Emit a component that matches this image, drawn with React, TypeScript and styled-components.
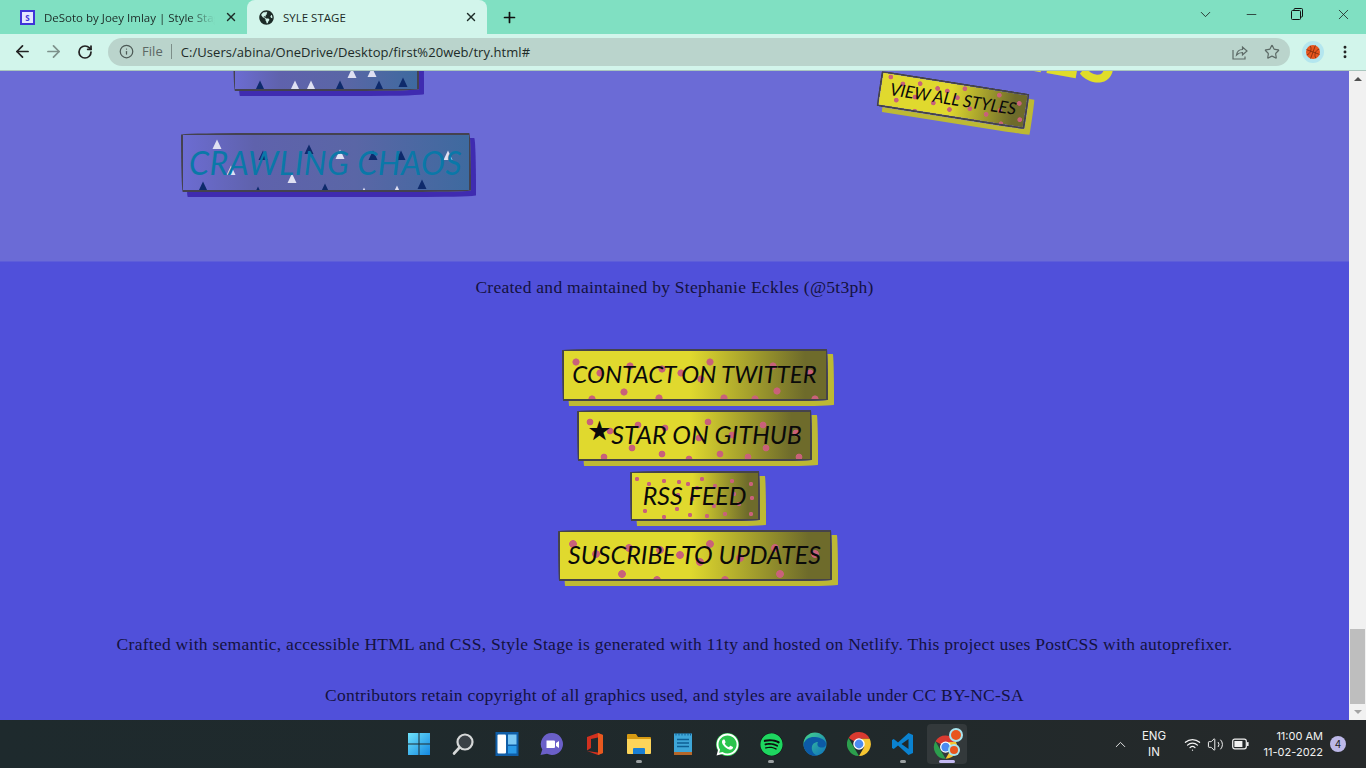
import * as React from "react";
import styled, { createGlobalStyle } from "styled-components";
import {
  ArrowLeft,
  ArrowRight,
  RotateCw,
  Info,
  Star,
  MoreVertical,
  ChevronDown,
  ChevronUp,
  Minus,
  X,
  Plus,
  Wifi,
  Volume2,
} from "lucide-react";
import { FaGlobeAmericas, FaWhatsapp, FaSpotify } from "react-icons/fa";

type Dot = [number, number];
type Tri = [number, number, boolean];

const GlobalStyle = createGlobalStyle`
  html, body { margin: 0; padding: 0; height: 100%; overflow: hidden; }
  #root { height: 100%; }
`;

// dots are painted as background layers so each button keeps its own pattern
const dotLayers = (dots: Dot[], r: number) =>
  dots
    .map(
      ([x, y]) =>
        `radial-gradient(circle at ${x}px ${y}px, #c9617a ${r}px, transparent ${r + 0.7}px)`
    )
    .join(", ");

const Screen = styled.div`
  width: 1366px;
  height: 768px;
  display: flex;
  flex-direction: column;
  overflow: hidden;
  font-family: "Open Sans", sans-serif;
`;

const TabStrip = styled.div`
  height: 34px;
  flex: none;
  background: #80e0c2;
  display: flex;
  align-items: flex-end;
  padding-left: 8px;
  color: #1c2b27;
  font-size: 11.5px;
`;

const Tab = styled.div<{ $active?: boolean; $width: number }>`
  width: ${({ $width }) => $width}px;
  height: 34px;
  box-sizing: border-box;
  display: flex;
  align-items: center;
  padding: 0 9px 0 12px;
  gap: 9px;
  border-radius: 8px 8px 0 0;
  background: ${({ $active }) => ($active ? "#d2f5eb" : "transparent")};
`;

const TabTitle = styled.span<{ $fade?: boolean }>`
  flex: 1;
  white-space: nowrap;
  overflow: hidden;
  ${({ $fade }) =>
    $fade &&
    `-webkit-mask-image: linear-gradient(to right, #000 85%, transparent);`}
`;

const Favicon = styled.span`
  width: 15px;
  height: 15px;
  box-sizing: border-box;
  border: 2px solid #3f33d8;
  background: #e4e6ff;
  color: #3f33d8;
  font-size: 8px;
  font-weight: 700;
  line-height: 11px;
  text-align: center;
`;

const NewTab = styled.div`
  width: 44px;
  height: 34px;
  display: flex;
  align-items: center;
  justify-content: center;
  color: #111;
`;

const WindowControls = styled.div`
  margin-left: auto;
  display: flex;
  align-self: flex-start;
  height: 28px;
  align-items: center;
`;

const WindowButton = styled.div`
  width: 46px;
  height: 28px;
  display: flex;
  align-items: center;
  justify-content: center;
  color: #1a1a1a;
`;

const RestoreIcon = styled.svg`
  width: 12px;
  height: 12px;
  fill: none;
  stroke: #111;
  stroke-width: 1;
`;

const Toolbar = styled.div`
  height: 37px;
  flex: none;
  box-sizing: border-box;
  background: #d2f5eb;
  border-bottom: 1px solid #a9c6be;
  display: flex;
  align-items: center;
  padding: 0 9px 1px 7px;
  color: #222;
`;

const NavButton = styled.div<{ $dim?: boolean }>`
  width: 31px;
  display: flex;
  justify-content: center;
  color: ${({ $dim }) => ($dim ? "#7d918b" : "#222")};
`;

const UrlBar = styled.div`
  flex: 1;
  height: 28px;
  margin-left: 8px;
  border-radius: 14px;
  background: #bad4cc;
  display: flex;
  align-items: center;
  padding: 0 2px 0 11px;
  font-size: 13px;
  letter-spacing: 0.05px;
  color: #202b28;
`;

const FileLabel = styled.span`
  color: #5b6764;
  margin-left: 8px;
  padding-right: 8px;
  border-right: 1px solid #7d8e89;
  line-height: 15px;
`;

const UrlText = styled.span`
  margin-left: 9px;
  flex: 1;
`;

const UrlAction = styled.div`
  width: 32px;
  display: flex;
  justify-content: center;
  color: #5c6a66;
`;

const ShareIcon = styled.svg`
  width: 16px;
  height: 16px;
  fill: none;
  stroke: #5c6a66;
  stroke-width: 1.2;
`;

const Avatar = styled.div`
  width: 22px;
  height: 22px;
  margin-left: 12px;
  border-radius: 50%;
  background: #b4e6ef;
  display: flex;
  align-items: center;
  justify-content: center;
`;

const MenuButton = styled.div`
  width: 24px;
  margin-left: 9px;
  display: flex;
  justify-content: center;
`;

const Viewport = styled.div`
  flex: 1;
  min-height: 0;
  display: flex;
`;

// anchored to the bottom: the page is scrolled to its end, the top overflows away
const Page = styled.main`
  flex: 1;
  min-width: 0;
  overflow: hidden;
  display: flex;
  flex-direction: column;
  justify-content: flex-end;
  font-family: "Liberation Serif", serif;
  color: #14123f;
`;

const Hero = styled.section`
  flex: none;
  background: #6b6bd6;
  display: grid;
  grid-template-columns: 650px 1fr;
`;

const StyleList = styled.div`
  display: flex;
  flex-direction: column;
  align-items: center;
  justify-content: flex-end;
  gap: 42px;
  padding: 0 0 69px 1px;
`;

const StyleCard = styled.a<{ $width: number; $height: number }>`
  position: relative;
  display: flex;
  align-items: center;
  justify-content: center;
  box-sizing: border-box;
  width: ${({ $width }) => $width}px;
  height: ${({ $height }) => $height}px;
  border: 2px solid #44424f;
  border-radius: 255px 8px 225px 8px / 8px 225px 8px 255px;
  box-shadow: 5px 5px 0 #3f2bb0;
  background: linear-gradient(to right, #6c6cd2 0%, #5f62ac 25%, #5a66a6 60%, #3e6a9f 100%);
  font-family: Lato, sans-serif;
  font-style: italic;
  font-size: 32px;
  color: #0a78a8;
  white-space: nowrap;
  overflow: hidden;
`;

const Confetti = styled.svg`
  position: absolute;
  left: 0;
  top: 0;
  width: 100%;
  height: 100%;
`;

const CardLabel = styled.span<{ $spread?: number }>`
  position: relative;
  letter-spacing: ${({ $spread }) => $spread ?? 0.5}px;
`;

const HeroAside = styled.div`
  display: flex;
  flex-direction: column;
  align-items: flex-start;
  justify-content: flex-end;
  padding: 0 0 143px 228px;
`;

const HeroTitle = styled.h2`
  margin: 0 0 5px 19px;
  font-family: Lato, sans-serif;
  font-weight: 900;
  font-size: 64px;
  line-height: 70px;
  color: #e0dd2a;
  transform: rotate(10deg);
  white-space: nowrap;
`;

const StageButton = styled.a<{
  $width: number;
  $height: number;
  $dots: Dot[];
  $r: number;
  $size: number;
  $tilt?: number;
}>`
  display: block;
  box-sizing: border-box;
  flex: none;
  width: ${({ $width }) => $width}px;
  height: ${({ $height }) => $height}px;
  line-height: ${({ $height }) => $height - 6}px;
  text-align: center;
  white-space: nowrap;
  border: 2.5px solid #45434a;
  border-radius: 255px 6px 225px 6px / 6px 225px 6px 255px;
  box-shadow: 6px 5px 0 #bdb934;
  background-image: ${({ $dots, $r }) => dotLayers($dots, $r)},
    linear-gradient(to right, #e0d92e 0%, #e0d92e 48%, #6e6b2b 92%);
  font-family: Lato, sans-serif;
  font-style: italic;
  font-size: ${({ $size }) => $size}px;
  color: #0a0a0a;
  transform: rotate(${({ $tilt }) => $tilt ?? 0}deg);
`;

const Credits = styled.section`
  flex: none;
  background: #5050da;
  border-top: 1px solid #5d5dd9;
  display: flex;
  flex-direction: column;
  align-items: center;
  padding: 12px 0 12px;
`;

const Line = styled.p<{ $after: number }>`
  margin: 0 0 ${({ $after }) => $after}px;
  font-size: 17.5px;
  line-height: 26px;
  text-align: center;
  letter-spacing: 0.27px;
`;

const Actions = styled.ul`
  display: flex;
  flex-direction: column;
  align-items: center;
  gap: 9.5px;
  list-style: none;
  margin: 0 0 50px;
  padding: 0 0 0 40px;
`;

const StarGlyph = styled.span`
  font-style: normal;
  font-family: "DejaVu Sans", sans-serif;
  font-size: 27px;
  position: relative;
  top: -4px;
`;

const Scrollbar = styled.div`
  width: 17px;
  flex: none;
  background: #f1f1f1;
  display: flex;
  flex-direction: column;
  align-items: center;
  justify-content: space-between;
`;

const ScrollArrow = styled.div<{ $down?: boolean }>`
  width: 0;
  height: 0;
  margin: 6px 0;
  border-left: 4px solid transparent;
  border-right: 4px solid transparent;
  ${({ $down }) =>
    $down ? "border-top: 4px solid #a3a3a3;" : "border-bottom: 4px solid #505050;"}
`;

const ScrollTrack = styled.div`
  flex: 1;
  width: 100%;
  display: flex;
  align-items: flex-end;
`;

const ScrollThumb = styled.div`
  width: 15px;
  height: 75px;
  margin: 0 1px;
  background: #bebebe;
`;

const Taskbar = styled.footer`
  height: 48px;
  flex: none;
  background: linear-gradient(to right, #1e2a2d, #20292b 60%, #26292a);
  display: grid;
  grid-template-columns: 399px auto 1fr;
  align-items: center;
  color: #f1f1f1;
  font-family: Inter, sans-serif;
`;

const Dock = styled.div`
  grid-column: 2;
  display: flex;
`;

const DockItem = styled.div<{ $active?: boolean; $open?: boolean }>`
  position: relative;
  width: 40px;
  height: 40px;
  margin-right: 4px;
  display: flex;
  align-items: center;
  justify-content: center;
  border-radius: 4px;
  background: ${({ $active }) => ($active ? "#33393b" : "transparent")};
  &::after {
    content: "";
    display: ${({ $open, $active }) => ($open || $active ? "block" : "none")};
    position: absolute;
    bottom: 1px;
    left: 50%;
    transform: translateX(-50%);
    width: ${({ $active }) => ($active ? 16 : 6)}px;
    height: 3px;
    border-radius: 2px;
    background: ${({ $active }) => ($active ? "#c3b9f2" : "#9aa0a2")};
  }
`;

const DockIcon = styled.svg<{ $size?: number }>`
  width: ${({ $size }) => $size ?? 24}px;
  height: ${({ $size }) => $size ?? 24}px;
`;

const GlyphBack = styled.div<{ $bg: string; $fg: string }>`
  width: 23px;
  height: 23px;
  border-radius: 50%;
  background: ${({ $bg }) => $bg};
  color: ${({ $fg }) => $fg};
  display: flex;
  align-items: center;
  justify-content: center;
`;

const Tray = styled.div`
  grid-column: 3;
  display: flex;
  align-items: center;
  justify-content: flex-end;
  padding-right: 20px;
`;

const Lang = styled.div`
  width: 44px;
  margin-left: 3px;
  text-align: center;
  font-size: 11.5px;
  line-height: 16px;
`;

const TrayIcon = styled.div<{ $gap: number }>`
  display: flex;
  margin-left: ${({ $gap }) => $gap}px;
  color: #f2f2f2;
`;

const BatteryIcon = styled.svg`
  width: 17px;
  height: 12px;
`;

const Clock = styled.div`
  width: 74px;
  text-align: right;
  font-size: 11px;
  line-height: 16px;
`;

const Badge = styled.div`
  width: 16px;
  height: 16px;
  margin-left: 7px;
  border-radius: 50%;
  background: #bdb8e8;
  color: #222;
  font-size: 10px;
  line-height: 16px;
  text-align: center;
`;

const Basketball = ({ size }: { size: number }) => (
  <svg width={size} height={size} viewBox="0 0 16 16">
    <circle cx="8" cy="8" r="8" fill="#e8551e" />
    <path
      d="M8 0v16M0 8h16M2.5 2.5C6 5 6 11 2.5 13.5M13.5 2.5C10 5 10 11 13.5 13.5"
      stroke="#7a2a0c"
      strokeWidth="0.8"
      fill="none"
      transform="rotate(20 8 8)"
    />
  </svg>
);

const ChromeMark = () => (
  <>
    <path d="M12 12 4.2 7.5A9 9 0 0 1 20 8h-8z" fill="#d93a30" />
    <path d="M12 21A9 9 0 0 1 4.2 7.5L8.5 15z" fill="#2c9e4d" />
    <path d="M20 8A9 9 0 0 1 12 21l3.9-6.7L14 8z" fill="#f6c531" />
    <circle cx="12" cy="12" r="4.3" fill="#fff" />
    <circle cx="12" cy="12" r="3.3" fill="#4c8bf0" />
  </>
);

const contactDots: Dot[] = [[12,11],[66,15],[36,22],[98,18],[117,22],[146,11],[137,28],[60,41],[95,47],[160,47],[213,40],[209,15],[246,22],[251,48],[28,48],[191,48]];
const starDots: Dot[] = [[11,10],[59,13],[31,19],[86,16],[129,10],[153,23],[184,13],[217,21],[187,36],[220,45],[169,45],[141,42],[110,47],[83,42],[53,36],[25,45],[120,26]];
const rssDots: Dot[] = [[5,6],[17,11],[32,8],[47,9],[56,11],[70,6],[65,15],[83,13],[100,8],[119,11],[120,25],[102,21],[60,26],[46,22],[13,38],[45,36],[32,44],[58,42],[75,43],[93,41],[119,41],[82,33],[107,31]];
const subDots: Dot[] = [[13,12],[69,16],[36,22],[100,18],[120,23],[150,12],[140,30],[62,42],[97,48],[165,48],[220,42],[215,16],[255,22],[180,26]];
const viewDots: Dot[] = [[8,3],[21,8],[38,5],[56,7],[66,8],[83,3],[118,4],[139,9],[17,25],[35,19],[54,22],[71,26],[37,33],[91,22],[108,25],[121,19],[97,34],[124,32],[142,25],[77,13]];

const chaosTris: Tri[] = [[34,10,true],[80,21,false],[126,15,false],[157,20,true],[190,21,false],[218,21,false],[265,21,true],[48,36,true],[109,44,true],[20,52,false],[75,57,false],[142,54,false],[239,50,false],[214,56,true],[181,58,true]];
const upperTris: Tri[] = [[25,57,false],[60,57,true],[76,57,true],[105,57,false],[144,57,false],[168,54,false],[117,45,true],[137,44,true]];

const Triangles = ({ items }: { items: Tri[] }) => (
  <Confetti>
    {items.map(([x, y, light]) => (
      <polygon
        key={`${x}-${y}`}
        points={`${x},${y - 5.5} ${x + 4.5},${y + 4} ${x - 4.5},${y + 4}`}
        fill={light ? "#dfe0f2" : "#0e2a6b"}
      />
    ))}
  </Confetti>
);

const App = () => {
  return (
    <Screen>
      <GlobalStyle />
      <TabStrip>
        <Tab $width={239}>
          <Favicon>S</Favicon>
          <TabTitle $fade>DeSoto by Joey Imlay | Style Stage</TabTitle>
          <X size={14} strokeWidth={2.4} />
        </Tab>
        <Tab $active $width={240}>
          <FaGlobeAmericas size={15} />
          <TabTitle>SYLE STAGE</TabTitle>
          <X size={14} strokeWidth={2.4} />
        </Tab>
        <NewTab>
          <Plus size={17} strokeWidth={2.4} />
        </NewTab>
        <WindowControls>
          <WindowButton>
            <ChevronDown size={17} strokeWidth={1.2} />
          </WindowButton>
          <WindowButton>
            <Minus size={15} strokeWidth={1.2} />
          </WindowButton>
          <WindowButton>
            <RestoreIcon viewBox="0 0 12 12">
              <rect x="0.5" y="2.5" width="9" height="9" rx="1" />
              <path d="M3 2.5V1.5a1 1 0 0 1 1-1h6.5a1 1 0 0 1 1 1V8a1 1 0 0 1-1 1H9.5" />
            </RestoreIcon>
          </WindowButton>
          <WindowButton>
            <X size={17} strokeWidth={1.1} />
          </WindowButton>
        </WindowControls>
      </TabStrip>

      <Toolbar>
        <NavButton>
          <ArrowLeft size={19} strokeWidth={2.2} />
        </NavButton>
        <NavButton $dim>
          <ArrowRight size={19} strokeWidth={2.2} />
        </NavButton>
        <NavButton>
          <RotateCw size={16} strokeWidth={2.6} />
        </NavButton>
        <UrlBar>
          <Info size={15} strokeWidth={2} color="#4d5a56" />
          <FileLabel>File</FileLabel>
          <UrlText>C:/Users/abina/OneDrive/Desktop/first%20web/try.html#</UrlText>
          <UrlAction>
            <ShareIcon viewBox="0 0 16 16">
              <path d="M1 6v9h12v-2.5" />
              <path d="M4.5 11c.5-3.5 3-5.5 6-5.5V3l4.5 4-4.5 4V8.5c-2.5 0-4.5 1-6 2.5z" />
            </ShareIcon>
          </UrlAction>
          <UrlAction>
            <Star size={16} strokeWidth={1.8} />
          </UrlAction>
        </UrlBar>
        <Avatar>
          <Basketball size={14} />
        </Avatar>
        <MenuButton>
          <MoreVertical size={16} strokeWidth={2.4} />
        </MenuButton>
      </Toolbar>

      <Viewport>
        <Page>
          <Hero>
            <StyleList>
              <StyleCard $width={186} $height={64}>
                <Triangles items={upperTris} />
                <CardLabel $spread={8}>DESOTO</CardLabel>
              </StyleCard>
              <StyleCard $width={290} $height={59}>
                <Triangles items={chaosTris} />
                <CardLabel>CRAWLING CHAOS</CardLabel>
              </StyleCard>
            </StyleList>
            <HeroAside>
              <HeroTitle>STYLES</HeroTitle>
              <StageButton
                $width={150}
                $height={36}
                $dots={viewDots}
                $r={2}
                $size={17}
                $tilt={9}
              >
                VIEW ALL STYLES
              </StageButton>
            </HeroAside>
          </Hero>

          <Credits>
            <Line $after={49}>Created and maintained by Stephanie Eckles (@5t3ph)</Line>
            <Actions>
              <li>
                <StageButton $width={266} $height={52} $dots={contactDots} $r={3.2} $size={24}>
                  CONTACT ON TWITTER
                </StageButton>
              </li>
              <li>
                <StageButton $width={235} $height={51} $dots={starDots} $r={3} $size={25}>
                  <StarGlyph>★</StarGlyph>STAR ON GITHUB
                </StageButton>
              </li>
              <li>
                <StageButton $width={130} $height={50} $dots={rssDots} $r={1.8} $size={25}>
                  RSS FEED
                </StageButton>
              </li>
              <li>
                <StageButton $width={274} $height={51} $dots={subDots} $r={3.5} $size={25}>
                  SUSCRIBE TO UPDATES
                </StageButton>
              </li>
            </Actions>
            <Line $after={25}>
              Crafted with semantic, accessible HTML and CSS, Style Stage is generated with 11ty and hosted on Netlify. This project uses PostCSS with autoprefixer.
            </Line>
            <Line $after={0}>
              Contributors retain copyright of all graphics used, and styles are available under CC BY-NC-SA
            </Line>
          </Credits>
        </Page>
        <Scrollbar>
          <ScrollArrow />
          <ScrollTrack>
            <ScrollThumb />
          </ScrollTrack>
          <ScrollArrow $down />
        </Scrollbar>
      </Viewport>

      <Taskbar>
        <Dock>
          <DockItem>
            <DockIcon viewBox="0 0 24 24">
              <defs>
                <linearGradient id="win" x1="0" y1="0" x2="1" y2="1">
                  <stop offset="0" stopColor="#6fe3fb" />
                  <stop offset="1" stopColor="#1487e0" />
                </linearGradient>
              </defs>
              <path d="M1 1h10.5v10.5H1zM12.5 1H23v10.5H12.5zM1 12.5h10.5V23H1zM12.5 12.5H23V23H12.5z" fill="url(#win)" />
            </DockIcon>
          </DockItem>
          <DockItem>
            <DockIcon viewBox="0 0 24 24">
              <circle cx="14" cy="10" r="7.5" fill="#3a4146" stroke="#d6d8d8" strokeWidth="2.2" />
              <path d="M8.5 15.5 3 21.5" stroke="#d6d8d8" strokeWidth="2.6" strokeLinecap="round" />
            </DockIcon>
          </DockItem>
          <DockItem>
            <DockIcon viewBox="0 0 24 24">
              <rect width="23" height="24" x="0.5" fill="#0f5ea8" />
              <rect x="2.5" y="2.5" width="8.5" height="19" rx="1" fill="#fff" />
              <rect x="13" y="2.5" width="8.5" height="10" fill="#7cc8f4" />
              <rect x="13" y="14" width="8.5" height="7.5" fill="#2a9ae8" />
            </DockIcon>
          </DockItem>
          <DockItem>
            <DockIcon viewBox="0 0 24 24">
              <path d="M13 1a11 11 0 1 1-5 20.8L1.5 23l1.8-5.5A11 11 0 0 1 13 1z" fill="#6a5fc8" />
              <path d="M7.5 8.5h7.5a1 1 0 0 1 1 1v5.5a1 1 0 0 1-1 1H7.5zM17 11l3-2v7l-3-2z" fill="#fff" />
            </DockIcon>
          </DockItem>
          <DockItem>
            <DockIcon viewBox="0 0 24 24">
              <path d="M4 5 15 1l5 2v18l-5 2-11-4 11 1.5V5.5L8 7v9l-4 2.5z" fill="#d1301f" />
              <path d="M15 1l5 2v18l-5 2z" fill="#e8591f" />
            </DockIcon>
          </DockItem>
          <DockItem $open>
            <DockIcon viewBox="0 0 24 24">
              <path d="M0 3a1 1 0 0 1 1-1h8l2 3h12a1 1 0 0 1 1 1v2H0z" fill="#d79a12" />
              <path d="M0 7h23a1 1 0 0 1 1 1v13a1 1 0 0 1-1 1H1a1 1 0 0 1-1-1z" fill="#fcd45a" />
              <path d="M6 17a1 1 0 0 1 1-1h10a1 1 0 0 1 1 1v5H6z" fill="#1a7fd4" />
            </DockIcon>
          </DockItem>
          <DockItem>
            <DockIcon viewBox="0 0 24 24">
              <rect x="3" y="1.5" width="18" height="21" fill="#3ea6d8" />
              <rect x="3" y="20" width="18" height="3" fill="#b5672a" />
              <path d="M6 7.5h12M6 11h12M6 14.5h12" stroke="#0e5f94" strokeWidth="1.6" />
              <path d="M5 1v2.5M8 1v2.5M11 1v2.5M14 1v2.5M17 1v2.5M19.5 1v2.5" stroke="#0e5f94" strokeWidth="1" />
            </DockIcon>
          </DockItem>
          <DockItem>
            <GlyphBack $bg="#2ac54d" $fg="#fff">
              <FaWhatsapp size={25} />
            </GlyphBack>
          </DockItem>
          <DockItem $open>
            <GlyphBack $bg="#0d0d0d" $fg="#1ed760">
              <FaSpotify size={23} />
            </GlyphBack>
          </DockItem>
          <DockItem>
            <DockIcon viewBox="0 0 24 24">
              <defs>
                <linearGradient id="edge" x1="0" y1="0" x2="1" y2="1">
                  <stop offset="0" stopColor="#46d78a" />
                  <stop offset="1" stopColor="#0d6fc0" />
                </linearGradient>
              </defs>
              <circle cx="12" cy="12" r="11.5" fill="url(#edge)" />
              <path d="M23 12c0 3-3 4-5.5 3.5C14 15 14 12 15 10c-4 0-7 3-6 8 .5 2.5 2.5 5 5.5 5.5A11.5 11.5 0 0 1 .5 12C2 7 7 4.5 12 5c6 .5 11 3 11 7z" fill="#0c5aa6" />
            </DockIcon>
          </DockItem>
          <DockItem>
            <DockIcon viewBox="3 3 18 18">
              <ChromeMark />
            </DockIcon>
          </DockItem>
          <DockItem $open>
            <DockIcon viewBox="0 0 24 24">
              <path d="M17.5 1 22 3v18l-4.5 2L7 13.5 2.8 17 1 16V8l1.8-1L7 10.5zM17.5 7 10.500 12l7 5z" fill="#0a82d0" />
            </DockIcon>
          </DockItem>
          <DockItem $active>
            <DockIcon viewBox="0 0 32 32" $size={32}>
              <g transform="translate(-1 3.5) scale(1.3)">
                <ChromeMark />
              </g>
              <circle cx="25" cy="7" r="7" fill="#a8e4ee" />
              <circle cx="25" cy="7" r="5" fill="#e8551e" />
              <circle cx="23" cy="22" r="6" fill="#a8e4ee" />
              <circle cx="23" cy="22" r="4" fill="#e8551e" />
            </DockIcon>
          </DockItem>
        </Dock>
        <Tray>
          <ChevronUp size={17} strokeWidth={1.3} />
          <Lang>
            ENG
            <br />
            IN
          </Lang>
          <TrayIcon $gap={8}>
            <Wifi size={17} strokeWidth={1.8} />
          </TrayIcon>
          <TrayIcon $gap={6}>
            <Volume2 size={17} strokeWidth={1.4} />
          </TrayIcon>
          <TrayIcon $gap={8}>
            <BatteryIcon viewBox="0 0 17 12">
              <rect x="0.7" y="1.2" width="13.6" height="9.6" rx="2" fill="none" stroke="#f2f2f2" strokeWidth="1.2" />
              <rect x="2.4" y="3" width="8" height="6" fill="#f2f2f2" />
              <rect x="15" y="4" width="1.6" height="4" rx="0.6" fill="#f2f2f2" />
            </BatteryIcon>
          </TrayIcon>
          <Clock>
            11:00 AM
            <br />
            11-02-2022
          </Clock>
          <Badge>4</Badge>
        </Tray>
      </Taskbar>
    </Screen>
  );
};

export default App;
